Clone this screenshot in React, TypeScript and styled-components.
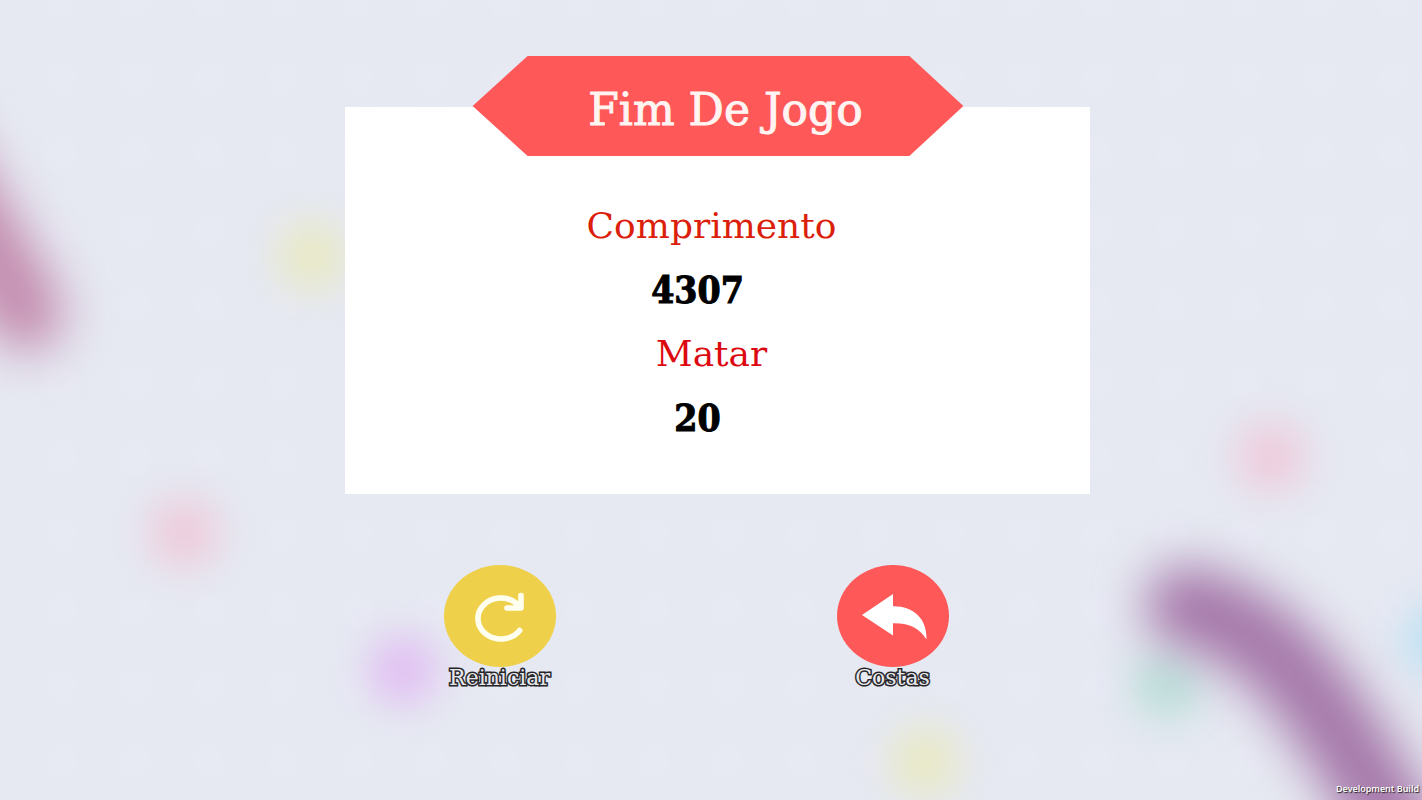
import React from 'react';
import styled, { createGlobalStyle } from 'styled-components';

const GlobalStyle = createGlobalStyle`
  * { box-sizing: border-box; }
  body {
    margin: 0;
    background: #e6e9f2;
    font-family: "DejaVu Serif", serif;
  }
`;

const Screen = styled.main`
  position: relative;
  min-height: 100vh;
  padding-top: 107px;
  display: flex;
  flex-direction: column;
  align-items: center;
  overflow: hidden;
`;

const Backdrop = styled.svg`
  position: absolute;
  inset: 0;
  width: 100%;
  height: 100%;
  z-index: -1;
`;

const Panel = styled.section`
  width: 52.4%;
  margin-left: 13px;
  padding-bottom: 44px;
  background: #fff;
  display: flex;
  flex-direction: column;
  align-items: center;
`;

const Banner = styled.h1`
  width: 66%;
  margin: -51px 0 38px;
  padding: 8px 0 0 16px;
  background: #ff5858;
  clip-path: polygon(56px 0, calc(100% - 54px) 0, 100% 50%, calc(100% - 54px) 100%, 56px 100%, 1px 50%);
  color: #fff4f2;
  font-size: 44px;
  font-weight: 400;
  line-height: 92px;
  text-align: center;
  white-space: nowrap;
  -webkit-text-stroke: 1px #fff4f2;
`;

const Stats = styled.dl`
  margin: 0;
  align-self: stretch;
  text-align: center;
  line-height: 64px;
`;

const StatName = styled.dt<{ $color: string }>`
  padding-right: 12px;
  color: ${(p) => p.$color};
  font-size: 36px;
`;

const StatValue = styled.dd`
  margin: 0;
  padding-right: 40px;
  color: #000;
  font-family: "DejaVu Serif Condensed", "DejaVu Serif", serif;
  font-size: 37px;
  font-weight: 700;
  -webkit-text-stroke: 1px #000;
`;

const Actions = styled.nav`
  margin-top: 71px;
  padding-right: 30px;
  display: flex;
  gap: 281px;
`;

const ActionButton = styled.button`
  width: 112px;
  padding: 0;
  border: 0;
  background: none;
  display: flex;
  flex-direction: column;
  align-items: center;
  cursor: pointer;
  font-family: inherit;
`;

const Disc = styled.svg`
  display: block;
  width: 112px;
  height: 102px;
`;

const ActionLabel = styled.span`
  color: #e6e6ea;
  font-size: 22px;
  line-height: 22px;
  -webkit-text-stroke: 3px #26262a;
  paint-order: stroke fill;
`;

const BuildTag = styled.small`
  position: absolute;
  right: 3px;
  bottom: 4px;
  color: #fff;
  font-family: "Open Sans", sans-serif;
  font-size: 9px;
  font-weight: 600;
  line-height: 14px;
  text-shadow: 1px 1px 1px #222;
`;

const dots = [
  { x: 312, y: 256, color: '#e9e9c4' },
  { x: 184, y: 533, color: '#eecbdb' },
  { x: 403, y: 670, color: '#e1bff2' },
  { x: 1271, y: 457, color: '#eecbdc' },
  { x: 1167, y: 685, color: '#bcded9' },
  { x: 925, y: 762, color: '#e9e9c4' },
  { x: 1438, y: 640, color: '#bce1f3' },
];

const stats = [
  { name: 'Comprimento', value: '4307', color: '#dc1f0c' },
  { name: 'Matar', value: '20', color: '#dc0a10' },
];

function Arena() {
  return (
    <Backdrop viewBox="0 0 1422 800" preserveAspectRatio="xMidYMid slice" aria-hidden="true">
      <defs>
        <filter id="soft" x="-100%" y="-100%" width="300%" height="300%" colorInterpolationFilters="sRGB">
          <feGaussianBlur stdDeviation="19" />
        </filter>
        <filter
          id="softer"
          filterUnits="userSpaceOnUse"
          x="-200"
          y="0"
          width="1900"
          height="1100"
          colorInterpolationFilters="sRGB"
        >
          <feGaussianBlur stdDeviation="25" />
        </filter>
        <filter id="faint" x="-5%" y="-5%" width="110%" height="110%" colorInterpolationFilters="sRGB">
          <feGaussianBlur stdDeviation="5" />
        </filter>
        <pattern id="lattice" width="74" height="76" patternUnits="userSpaceOnUse" x="24" y="40">
          <circle cx="37" cy="38" r="18" fill="#e7e9f3" />
        </pattern>
      </defs>
      <rect width="1422" height="800" fill="#e6e9f2" />
      <rect width="1422" height="800" fill="url(#lattice)" filter="url(#faint)" />
      {dots.map((d) => (
        <circle key={`${d.x}-${d.y}`} cx={d.x} cy={d.y} r="35" fill={d.color} filter="url(#soft)" />
      ))}
      <g fill="none" strokeLinecap="round" filter="url(#softer)">
        <path d="M-80 130 Q-20 230 26 314" stroke="#c288ac" strokeWidth="74" />
        <path d="M1186 606 Q1260 622 1320 706 Q1370 776 1425 880" stroke="#a476a8" strokeWidth="80" />
      </g>
    </Backdrop>
  );
}

function RestartIcon() {
  return (
    <Disc viewBox="0 0 112 102" aria-hidden="true">
      <ellipse cx="56" cy="51" rx="56" ry="51" fill="#efd04a" />
      <g fill="none" stroke="#fffff0" strokeWidth="5.6" strokeLinecap="round" strokeLinejoin="round">
        <path d="M75.6 65.500A23 20.500 0 1 1 72 38L76 42" />
        <path d="M77 30.500V43H63" />
      </g>
    </Disc>
  );
}

function BackIcon() {
  return (
    <Disc viewBox="0 0 112 102" aria-hidden="true">
      <ellipse cx="56" cy="51" rx="56" ry="51" fill="#ff5858" />
      <path d="M25 50L56 29V41.300C76 41 90 53 89.500 74.500C82 63 73 58 56 58.300V70.500Z" fill="#fff" />
    </Disc>
  );
}

export default function App() {
  return (
    <>
      <GlobalStyle />
      <Screen>
        <Arena />
        <Panel>
          <Banner>Fim De Jogo</Banner>
          <Stats>
            {stats.map((s) => (
              <React.Fragment key={s.name}>
                <StatName $color={s.color}>{s.name}</StatName>
                <StatValue>{s.value}</StatValue>
              </React.Fragment>
            ))}
          </Stats>
        </Panel>
        <Actions>
          <ActionButton type="button">
            <RestartIcon />
            <ActionLabel>Reiniciar</ActionLabel>
          </ActionButton>
          <ActionButton type="button">
            <BackIcon />
            <ActionLabel>Costas</ActionLabel>
          </ActionButton>
        </Actions>
        <BuildTag>Development Build</BuildTag>
      </Screen>
    </>
  );
}
